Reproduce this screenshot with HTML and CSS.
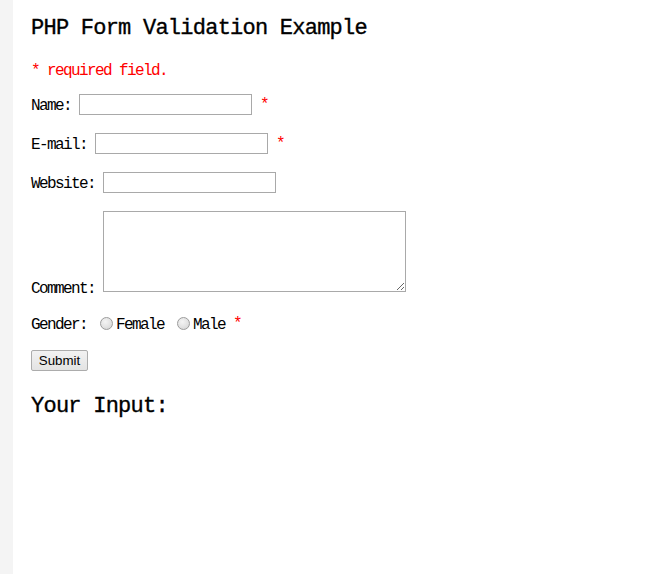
FILE: index.html
```html
<!DOCTYPE html>
<html>
<head>
<meta charset="utf-8">
<title>PHP Form Validation Example</title>
<link rel="stylesheet" href="styles.css">
</head>
<body>
<div class="page">
  <div class="strip"></div>
  <div class="content">
    <h2 class="title">PHP Form Validation Example</h2>
    <p class="error note">* required field.</p>
    <form class="form">
      <div class="row">
        <label class="label">Name:</label>
        <input class="text w-name" type="text" name="name">
        <span class="error star">*</span>
      </div>
      <div class="row">
        <label class="label">E-mail:</label>
        <input class="text" type="text" name="email">
        <span class="error star">*</span>
      </div>
      <div class="row">
        <label class="label">Website:</label>
        <input class="text" type="text" name="website">
      </div>
      <div class="row row-comment">
        <label class="label label-comment">Comment:</label>
        <textarea class="comment" name="comment"></textarea>
      </div>
      <div class="row row-gender">
        <span class="label">Gender:</span>
        <input class="radio" type="radio" name="gender" value="female"><span class="opt">Female</span>
        <input class="radio" type="radio" name="gender" value="male"><span class="opt">Male</span>
        <span class="error star">*</span>
      </div>
      <div class="row-submit">
        <button class="submit" type="button">Submit</button>
      </div>
    </form>
    <h2 class="title title-input">Your Input:</h2>
  </div>
</div>
</body>
</html>
```
FILE: styles.css
```css
html, body {
  margin: 0;
  padding: 0;
  background: #ffffff;
}

.page {
  display: flex;
  min-height: 574px;
  font-family: "Liberation Mono", "DejaVu Sans Mono", monospace;
  font-size: 16px;
  letter-spacing: -1.6px;
  color: #000;
}

.strip {
  width: 13px;
  flex: 0 0 13px;
  background: #f4f4f4;
}

.content {
  padding-left: 18px;
  flex: 1;
}

.title {
  margin: 16px 0 0;
  font-size: 22px;
  line-height: 26px;
  letter-spacing: -0.76px;
  font-weight: normal;
  -webkit-text-stroke: 0.35px #000;
}

.note {
  margin: 19px 0 0;
  line-height: 20px;
}

.error {
  color: #ff0000;
}

.form {
  margin: 13px 0 0;
}

.row {
  display: flex;
  align-items: center;
  height: 21px;
  margin-bottom: 18px;
  line-height: 20px;
  white-space: nowrap;
}

.label,
.opt {
  padding-top: 2px;
}

.label {
  margin-right: 8px;
}

.text {
  box-sizing: border-box;
  width: 173px;
  height: 21px;
  margin: 0;
  border: 1px solid #a9a9a9;
  padding: 1px 2px;
  background: #fff;
  font-family: "Liberation Sans", Arial, sans-serif;
  font-size: 13px;
}

.star {
  margin-left: 8px;
}

.row-comment {
  height: 81px;
  align-items: flex-end;
  margin-bottom: 21px;
}

.label-comment {
  padding-top: 0;
  line-height: 14px;
  margin-bottom: -4px;
}

.comment {
  box-sizing: border-box;
  width: 303px;
  height: 81px;
  margin: 0;
  border: 1px solid #a9a9a9;
  padding: 2px;
  resize: both;
  font-family: "Liberation Mono", monospace;
  font-size: 13px;
}

.row-gender {
  margin-bottom: 16px;
}

.row-gender .label {
  margin-right: 13px;
}

.radio {
  appearance: none;
  -webkit-appearance: none;
  box-sizing: border-box;
  width: 13px;
  height: 13px;
  margin: 0 3px 0 0;
  border: 1px solid #9c9c9c;
  border-radius: 50%;
  background: radial-gradient(circle at 40% 35%, #f4f4f4 0%, #e2e2e2 55%, #cfcfcf 100%);
}

.opt + .radio {
  margin-left: 13px;
}

.row-submit {
  height: 21px;
}

.submit {
  box-sizing: border-box;
  width: 57px;
  height: 21px;
  margin: 0;
  padding: 0 6px;
  border: 1px solid #acacac;
  border-radius: 2px;
  background: linear-gradient(#f2f2f2, #e3e3e3);
  font-family: "Liberation Sans", Arial, sans-serif;
  font-size: 13.33px;
  letter-spacing: 0;
  color: #000;
}

.title-input {
  margin-top: 23px;
}
```
